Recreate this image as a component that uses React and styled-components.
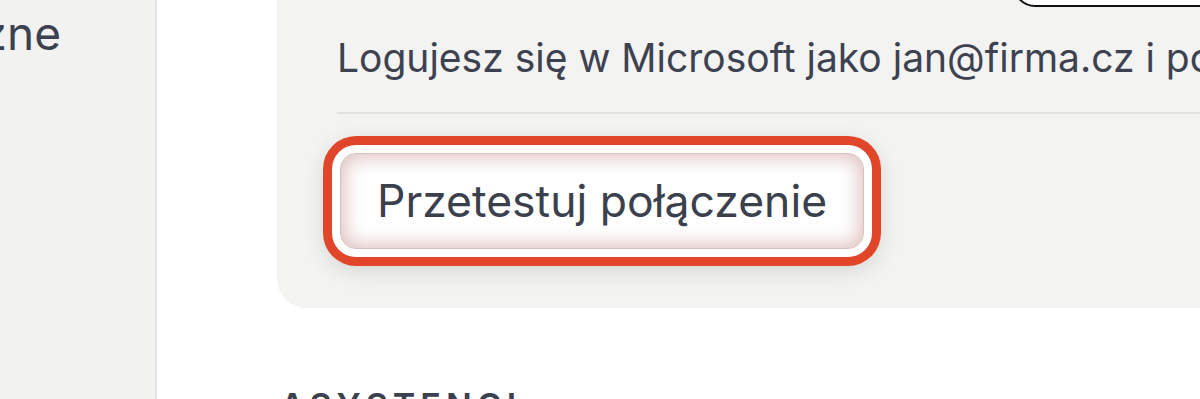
import React from "react";
import styled, { createGlobalStyle } from "styled-components";

const Global = createGlobalStyle`
  html, body { margin: 0; padding: 0; background: #ffffff; }
  body { font-family: Inter, "Noto Sans", sans-serif; color: #3c4150; }
  * { box-sizing: border-box; }
`;

const Page = styled.div`
  display: flex;
  width: 1200px;
  height: 399px;
  overflow: hidden;
  background: #ffffff;
`;

const Sidebar = styled.aside`
  flex: 0 0 157px;
  background: #f2f2f0;
  border-right: 2px solid #e4e4e2;
  overflow: hidden;
  display: flex;
  justify-content: flex-end;
`;

const NavLabel = styled.div`
  margin-top: 5px;
  margin-right: 94px;
  font-size: 46px;
  line-height: 56px;
  color: #3c4150;
  white-space: nowrap;
`;

const Main = styled.main`
  flex: 1 1 auto;
  min-width: 0;
  padding-left: 120px;
  overflow: hidden;
`;

const Card = styled.section`
  width: 1200px;
  margin-top: -80px;
  padding: 0 0 59px 60px;
  background: #f3f3f1;
  border-radius: 0 0 0 30px;
`;

const TopRow = styled.div`
  display: flex;
  height: 86px;
`;

const Outlined = styled.div`
  margin-left: 676px;
  width: 400px;
  height: 87px;
  background: #ffffff;
  border: 2.5px solid #111111;
  border-radius: 0 0 0 22px;
`;

const Description = styled.p`
  margin: 22px 0 0;
  font-size: 39px;
  line-height: 60px;
  color: #3d4251;
  white-space: nowrap;
`;

const Divider = styled.hr`
  margin: 24px 0 0;
  border: 0;
  height: 2px;
  background: #e2e2e0;
`;

const ButtonRow = styled.div`
  display: flex;
  padding-top: 39px;
  padding-left: 3px;
`;

const TestButton = styled.button`
  height: 96px;
  padding: 0 36px;
  font-family: Inter, "Noto Sans", sans-serif;
  font-size: 44.5px;
  color: #3b404d;
  background: #ffffff;
  border: 1.5px solid #d9bfbd;
  border-radius: 16px;
  box-shadow:
    inset 0 0 18px 4px rgba(190, 135, 130, 0.5),
    0 0 0 8px #ffffff,
    0 0 0 17px #e1462a,
    0 6px 22px 16px rgba(0, 0, 0, 0.12);
  cursor: pointer;
`;

const SectionTitle = styled.h2`
  margin: 77px 0 0 3px;
  font-size: 34px;
  font-weight: 600;
  letter-spacing: 5px;
  text-transform: uppercase;
  color: #3c4150;
`;

export default function App() {
  return (
    <>
      <Global />
      <Page>
        <Sidebar>
          <NavLabel>Integracje zewnętrzne</NavLabel>
        </Sidebar>
        <Main>
          <Card>
            <TopRow>
              <Outlined />
            </TopRow>
            <Description>
              Logujesz się w Microsoft jako jan@firma.cz i połączenie zostanie zapisane
            </Description>
            <Divider />
            <ButtonRow>
              <TestButton>Przetestuj połączenie</TestButton>
            </ButtonRow>
          </Card>
          <SectionTitle>Asystenci</SectionTitle>
        </Main>
      </Page>
    </>
  );
}
